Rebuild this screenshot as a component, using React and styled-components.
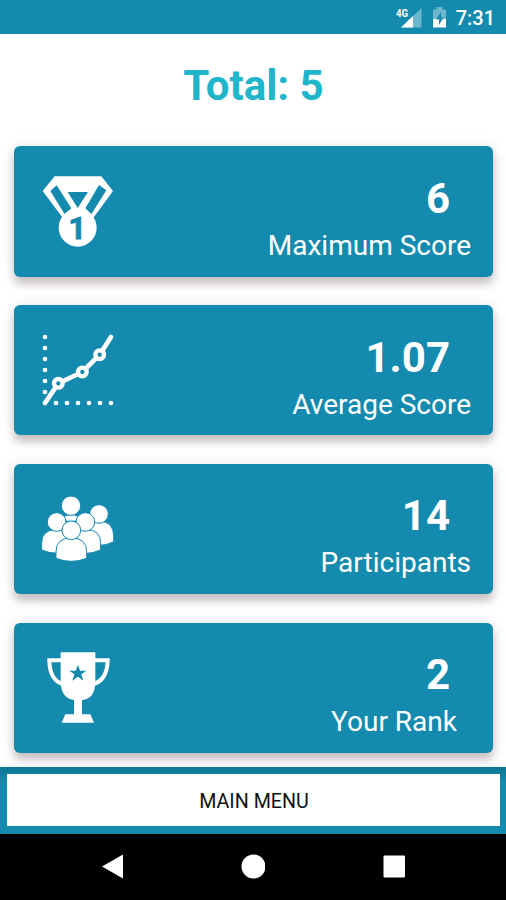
import React from 'react'
import styled, { createGlobalStyle } from 'styled-components'

const GlobalStyle = createGlobalStyle`
  * {
    box-sizing: border-box;
  }

  body {
    margin: 0;
    background: #fff;
    font-family: Roboto, "Open Sans", sans-serif;
  }
`

const MedalIcon = () => (
    <Icon viewBox="39 33 210 210">
        <path
            fill="#fff"
            fillRule="evenodd"
            d="M74 34H214L249 78L189 160H99L38 78ZM61 78L104 148L124 130L80 61ZM113 81L143 129L174 81ZM207 60L166 130L184 148L229 76Z"
        />
        <circle cx="143" cy="188" r="57" fill="#fff" />
        <text x="142" y="222" textAnchor="middle" fill="#148bae" stroke="#148bae" strokeWidth="3" fontSize="92" fontWeight="700">1</text>
    </Icon>
)

const ChartIcon = () => (
    <Icon viewBox="39 30 210 210">
        <g fill="#fff">
            {[36, 69, 102, 135, 168, 201].map((y) => <circle key={y} cx="45" cy={y} r="7" />)}
            {[78, 111, 144, 177, 210, 243].map((x) => <circle key={x} cx={x} cy="234" r="7" />)}
        </g>
        <path d="M45 234L85 175L157 141L209 89L243 36" fill="none" stroke="#fff" strokeWidth="14" strokeLinecap="round" strokeLinejoin="round" />
        <g fill="#148bae" stroke="#fff" strokeWidth="13">
            <circle cx="85" cy="175" r="13" />
            <circle cx="157" cy="141" r="13" />
            <circle cx="209" cy="89" r="13" />
        </g>
    </Icon>
)

const PeopleIcon = () => (
    <Icon viewBox="39 26 210 210">
        <g fill="#fff" stroke="#148bae" strokeWidth="3">
            <path d="M165 176V153Q165 108 208 108Q251 108 251 153V169Q230 180 208 180Q185 180 165 176Z" />
            <circle cx="207" cy="86" r="28" />
            <path d="M103 94Q123 86 144 94V103Q123 110 103 103Z" stroke="none" />
            <circle cx="123" cy="61" r="29" />
            <path d="M35 194V174Q35 133 78 133Q121 133 121 174V196Q78 212 35 194Z" />
            <circle cx="80" cy="110" r="28" />
            <path d="M126 199V174Q126 133 169 133Q212 133 212 174V194Q169 212 126 199Z" />
            <circle cx="166" cy="110" r="28" />
            <path d="M78 219V199Q78 158 124 158Q170 158 170 199V219Q124 237 78 219Z" />
            <circle cx="124" cy="135" r="28" />
        </g>
    </Icon>
)

const TrophyIcon = () => (
    <Icon viewBox="39 39 210 210">
        <g fill="none" stroke="#fff" strokeWidth="12">
            <path d="M93 61H58Q59 121 98 132" />
            <path d="M195 61H233Q231 121 190 132" />
        </g>
        <path fill="#fff" d="M92 37H196V125Q195 177 156 180V223H181L192 248H95L106 223H132V180Q93 174 92 125Z" />
        <path fill="#148bae" d="M144 74L150 92H169L154 103L160 122L144 110L127 122L133 103L118 92H137Z" />
    </Icon>
)

const StatusIcons = () => (
    <StatusSvg viewBox="0 0 54 24">
        <text x="0" y="11" fill="#fff" fontSize="11.500" fontWeight="700" textLength="12" lengthAdjust="spacingAndGlyphs">4G</text>
        <path d="M25.500 2V21.500H5Z" fill="#fff" opacity=".38" />
        <path d="M17 10V21.500H5Z" fill="#fff" />
        <path d="M37 3.500H40.500V1H46.500V3.500H50V13H37Z" fill="#fff" opacity=".38" />
        <path d="M37 13H50V21.500H37Z" fill="#fff" />
        <path d="M45 6L40 13.500H43V19L47.500 11.500H45Z" fill="#148bae" />
    </StatusSvg>
)

const stats = [
    { value: '6', label: 'Maximum Score', icon: MedalIcon },
    { value: '1.07', label: 'Average Score', icon: ChartIcon },
    { value: '14', label: 'Participants', icon: PeopleIcon },
    { value: '2', label: 'Your Rank', icon: TrophyIcon, inset: 14 },
]

export default function App() {
    return (
        <Screen>
            <GlobalStyle />
            <StatusBar>
                <StatusIcons />
                <Clock>7:31</Clock>
            </StatusBar>

            <Content>
                <Title>Total: 5</Title>
                <CardList>
                    {stats.map(({ value, label, icon: StatIcon, inset }) => (
                        <Card key={label}>
                            <StatIcon />
                            <Details>
                                <Value>{value}</Value>
                                <Label $inset={inset}>{label}</Label>
                            </Details>
                        </Card>
                    ))}
                </CardList>
            </Content>

            <Footer>
                <MenuButton>MAIN MENU</MenuButton>
            </Footer>

            <NavBar>
                <NavItem>
                    <svg width="24" height="26" viewBox="0 0 24 26"><path d="M2 12.500L23 .5V24.500Z" fill="#fff" /></svg>
                </NavItem>
                <NavItem>
                    <svg width="24" height="26" viewBox="0 0 24 26"><circle cx="12.500" cy="12.500" r="12" fill="#fff" /></svg>
                </NavItem>
                <NavItem>
                    <svg width="24" height="26" viewBox="0 0 24 26"><rect x="1.500" y="1.500" width="21.500" height="22" rx="1" fill="#fff" /></svg>
                </NavItem>
            </NavBar>
        </Screen>
    )
}

const Screen = styled.div`
  display: flex;
  flex-direction: column;
  width: 506px;
  height: 900px;
  overflow: hidden;
`

const StatusBar = styled.header`
  display: flex;
  align-items: center;
  justify-content: flex-end;
  flex: none;
  height: 34px;
  padding: 2px 11px 0 0;
  background: #148bae;
`

const StatusSvg = styled.svg`
  width: 54px;
  height: 24px;
  margin-right: 6px;
`

const Clock = styled.span`
  color: #fff;
  font-size: 20px;
  font-weight: 500;
  line-height: 24px;
`

const Content = styled.main`
  flex: none;
  height: 733px;
  overflow: hidden;
`

const Title = styled.h1`
  margin: 0;
  height: 112.400px;
  padding: 27px 0 0 1px;
  color: #1fb5ca;
  font-size: 42px;
  font-weight: 700;
  line-height: 50px;
  text-align: center;
`

const CardList = styled.section`
  display: grid;
  gap: 28.600px;
  padding: 0 13px 0 14px;
`

const Card = styled.article`
  display: flex;
  align-items: center;
  justify-content: space-between;
  height: 130.200px;
  padding: 0 22px 0 29px;
  border-radius: 6px;
  background: #148bae;
  box-shadow: 0 7px 9px rgba(60, 35, 40, 0.25), 0 0 16px rgba(0, 0, 0, 0.09);
`

const Icon = styled.svg`
  width: 70px;
  height: 70px;
  overflow: visible;
`

const Details = styled.div`
  display: flex;
  flex-direction: column;
  align-items: flex-end;
  padding-top: 18.500px;
  color: #fff;
`

const Value = styled.strong`
  padding-right: 21px;
  font-size: 42px;
  font-weight: 700;
  line-height: 50px;
`

const Label = styled.span`
  padding-right: ${({ $inset }) => $inset || 0}px;
  font-size: 28px;
  line-height: 44px;
`

const Footer = styled.footer`
  flex: none;
  height: 66.500px;
  padding: 7px 6px 7px 7px;
  background: linear-gradient(#0b7694 0, #0f809f 7px, #148bae 16px);
`

const MenuButton = styled.button`
  display: block;
  width: 100%;
  height: 52px;
  padding: 2px 0 0 1px;
  border: 0;
  background: #fff;
  color: #111;
  font-family: inherit;
  font-size: 19.700px;
  font-weight: 400;
`

const NavBar = styled.nav`
  display: grid;
  grid-template-columns: repeat(3, 1fr);
  flex: none;
  height: 66.500px;
  padding: 0 42px;
  background: #000;
`

const NavItem = styled.div`
  display: flex;
  align-items: center;
  justify-content: center;
`
